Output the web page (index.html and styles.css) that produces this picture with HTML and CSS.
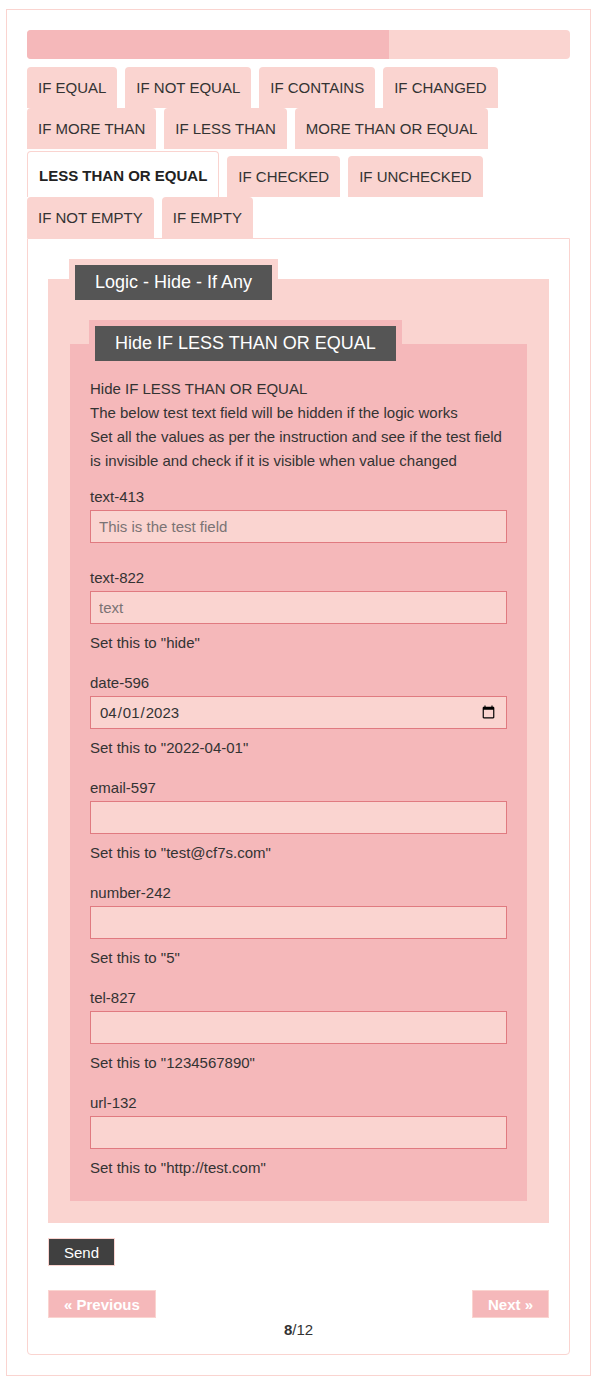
FILE: index.html
```html
<!DOCTYPE html>
<html lang="en">
<head>
  <meta charset="UTF-8" />
  <meta name="viewport" content="width=device-width, initial-scale=1" />
  <title>Hide IF LESS THAN OR EQUAL</title>
  <link rel="stylesheet" href="styles.css">
</head>
<body>
  <div class="page">
    <div class="progress"><div class="progress-fill" style="width:66.67%"></div></div>

    <ul class="tabs">
      <li class="tab">IF EQUAL</li>
      <li class="tab">IF NOT EQUAL</li>
      <li class="tab">IF CONTAINS</li>
      <li class="tab">IF CHANGED</li>
      <li class="tab">IF MORE THAN</li>
      <li class="tab">IF LESS THAN</li>
      <li class="tab">MORE THAN OR EQUAL</li>
      <li class="tab active">LESS THAN OR EQUAL</li>
      <li class="tab">IF CHECKED</li>
      <li class="tab">IF UNCHECKED</li>
      <li class="tab">IF NOT EMPTY</li>
      <li class="tab">IF EMPTY</li>
    </ul>

    <form class="panel">
      <div class="group outer">
        <div class="legend"><span>Logic - Hide - If Any</span></div>

        <div class="group inner">
          <div class="legend"><span>Hide IF LESS THAN OR EQUAL</span></div>

          <p class="intro">
            Hide IF LESS THAN OR EQUAL<br>
            The below test text field will be hidden if the logic works<br>
            Set all the values as per the instruction and see if the test field is invisible and check if it is visible when value changed
          </p>

          <div class="field first">
            <label for="text-413">text-413</label>
            <input type="text" id="text-413" placeholder="This is the test field">
          </div>

          <div class="field">
            <label for="text-822">text-822</label>
            <input type="text" id="text-822" placeholder="text">
            <p class="help">Set this to "hide"</p>
          </div>

          <div class="field">
            <label for="date-596">date-596</label>
            <input type="date" id="date-596" value="2023-04-01">
            <p class="help">Set this to "2022-04-01"</p>
          </div>

          <div class="field">
            <label for="email-597">email-597</label>
            <input type="email" id="email-597">
            <p class="help">Set this to "test@cf7s.com"</p>
          </div>

          <div class="field">
            <label for="number-242">number-242</label>
            <input type="text" id="number-242">
            <p class="help">Set this to "5"</p>
          </div>

          <div class="field">
            <label for="tel-827">tel-827</label>
            <input type="tel" id="tel-827">
            <p class="help">Set this to "1234567890"</p>
          </div>

          <div class="field last">
            <label for="url-132">url-132</label>
            <input type="url" id="url-132">
            <p class="help">Set this to "http://test.com"</p>
          </div>
        </div>
      </div>

      <button type="submit" class="send">Send</button>

      <div class="pager">
        <button type="button" class="pager-btn">&laquo; Previous</button>
        <button type="button" class="pager-btn">Next &raquo;</button>
      </div>
      <div class="count"><b>8</b>/12</div>
    </form>
  </div>
</body>
</html>
```

FILE: styles.css
```css
body {
  font-family: "Liberation Sans", Arial, sans-serif;
  font-size: 15px;
  line-height: 24px;
  color: #333;
  margin: 0;
  background: #fff;
}
.page {
  margin: 9px 4px 6px 6px;
  padding: 20px;
  border: 1px solid #fad4d0;
}
.progress {
  height: 29px;
  background: #fad4d0;
  border-radius: 4px;
  overflow: hidden;
}
.progress-fill {
  height: 100%;
  background: #f5b8ba;
}
.tabs {
  list-style: none;
  margin: 8px 0 0;
  padding: 0;
  display: flex;
  flex-wrap: wrap;
  align-items: flex-end;
  column-gap: 8px;
}
.tab {
  height: 41px;
  box-sizing: border-box;
  padding: 12px 11px 0;
  line-height: 18px;
  background: #fad4d0;
  border-radius: 4px 4px 0 0;
  color: #333;
}
.tab.active {
  height: 46px;
  margin-top: 2px;
  padding: 15px 11px 0;
  background: #fff;
  border: 1px solid #fad4d0;
  border-bottom: none;
  font-weight: 700;
  color: #222;
}
.panel {
  border: 1px solid #fad4d0;
  border-radius: 0 0 4px 4px;
  padding: 20px 20px 12px;
  margin: 0;
}
.group {
  padding: 0 22px 22px;
  background: #fad4d0;
}
.group.outer {
  margin-top: 20px;
}
.group.inner {
  margin-top: 38px;
  padding: 0 20px 21px;
  background: #f5b8ba;
}
.legend {
  display: inline-block;
  vertical-align: top;
  padding: 6px;
  background: inherit;
  margin: -20px 0 0 -1px;
}
.inner > .legend {
  margin-top: -24px;
}
.legend span {
  display: block;
  background: #555;
  color: #fff;
  font-size: 18px;
  line-height: 35px;
  padding: 0 20px;
}
.intro {
  margin: 9px 0 0;
}
.field {
  margin-bottom: 16px;
}
.field.first {
  margin-top: 12px;
  margin-bottom: 23px;
}
.field.last {
  margin-bottom: 0;
}
.field label {
  display: block;
}
.field input {
  display: block;
  width: 100%;
  height: 33px;
  margin-top: 1px;
  box-sizing: border-box;
  padding: 0 8px;
  border: 1px solid #e07a80;
  background: #fad4d0;
  font-family: inherit;
  font-size: 15px;
  color: #333;
  border-radius: 0;
}
.field input::placeholder {
  color: #7a7374;
}
.help {
  margin: 7px 0 0;
}
.send {
  display: block;
  margin-top: 15px;
  height: 28px;
  padding: 0 15px;
  background: #404040;
  color: #fff;
  border: 1px solid #fad4d0;
  font-family: inherit;
  font-size: 15px;
  cursor: pointer;
}
.pager {
  display: flex;
  justify-content: space-between;
  margin-top: 24px;
}
.pager-btn {
  height: 28px;
  padding: 0 15px;
  background: #f5b8ba;
  color: #fff;
  border: 1px solid #fad4d0;
  font-family: inherit;
  font-size: 15px;
  font-weight: 700;
  cursor: pointer;
}
.count {
  text-align: center;
  color: #333;
}
```
